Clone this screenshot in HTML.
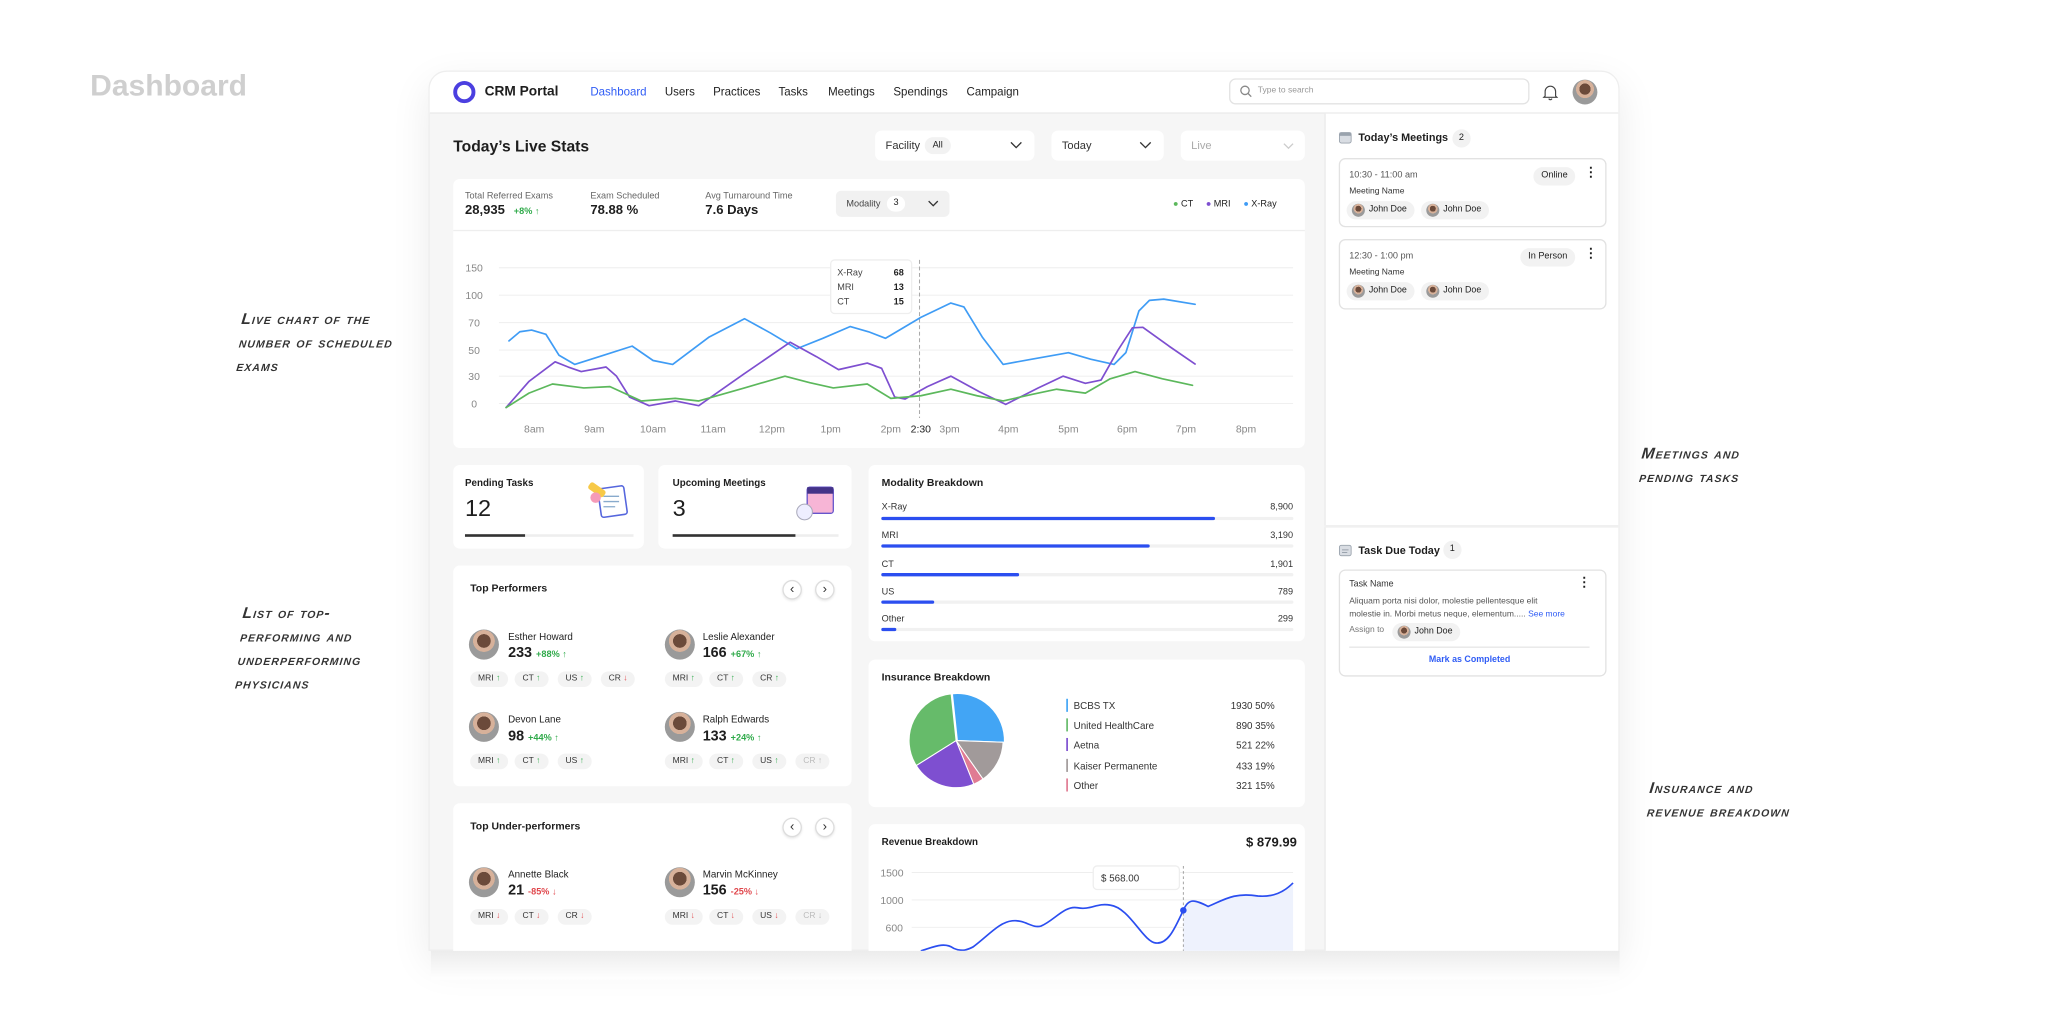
<!DOCTYPE html>
<html><head><meta charset="utf-8">
<style>
*{margin:0;padding:0;box-sizing:border-box}
html,body{width:2048px;height:1021px;overflow:hidden;background:#fff;font-family:"Liberation Sans",Arial,sans-serif;color:#1e1e1e}
#w{position:absolute;left:0;top:0;width:1568px;height:782px;transform:scale(1.30612);transform-origin:0 0}
.a{position:absolute;white-space:nowrap;line-height:1}
.card{position:absolute;background:#fff;border-radius:5px}
.note{position:absolute;font-style:italic;font-weight:bold;font-variant:small-caps;font-size:12px;line-height:18px;color:#333;letter-spacing:.8px;transform:skewX(-6deg)}
.chip{position:absolute;height:12px;line-height:12px;font-size:6.5px;background:#f3f3f3;border-radius:6px;padding:0 6px;color:#333}
.up{color:#2faa4a}.dn{color:#e0474c}
.av{position:absolute;border-radius:50%;background:radial-gradient(circle at 50% 38%,#6b4a3a 0 28%,#d7b19a 29% 45%,#9a9a9a 46%)}
.sm{font-size:7px;color:#555}
.nav{font-size:8.8px;top:66px;color:#222}
.arrow{position:absolute;width:15px;height:15px;border:1px solid #ddd;border-radius:50%;font-size:10px;line-height:13px;text-align:center;color:#333;background:#fff;box-shadow:0 1px 2px rgba(0,0,0,.1)}
.pill{position:absolute;background:#f2f2f2;border-radius:8px;font-size:7px;padding:0 6px;height:14px;line-height:14px}
</style></head><body><div id="w">

<div class="a" style="left:69px;top:54px;font-size:23px;font-weight:bold;color:#cfcfcf">Dashboard</div>

<div class="note" style="left:183px;top:235px">Live chart of the<br>number of scheduled<br>exams</div>
<div class="note" style="left:183px;top:460px">List of top-<br>performing and<br>underperforming<br>physicians</div>
<div class="note" style="left:1256px;top:338px">Meetings and<br>pending tasks</div>
<div class="note" style="left:1262px;top:594px">Insurance and<br>revenue breakdown</div>

<!-- frame -->
<div style="position:absolute;left:328px;top:54px;width:912px;height:674px;border-radius:14px 14px 0 0;background:#f6f6f6;box-shadow:0 10px 30px rgba(0,0,0,.08);overflow:hidden;border:1px solid #eee">
</div>
<div style="position:absolute;left:330px;top:728px;width:910px;height:22px;background:linear-gradient(#ececec,#fff)"></div>

<!-- navbar -->
<div style="position:absolute;left:329px;top:55px;width:910px;height:32px;background:#fff;border-bottom:1px solid #e8e8e8;border-radius:13px 13px 0 0"></div>
<div style="position:absolute;left:347px;top:62px;width:17px;height:17px;border-radius:50%;border:3.5px solid #4b3fe0"></div>
<div class="a" style="left:371px;top:65px;font-size:10.5px;font-weight:600">CRM Portal</div>
<div class="a nav" style="left:452px;color:#2f5cf5">Dashboard</div>
<div class="a nav" style="left:509px">Users</div>
<div class="a nav" style="left:546px">Practices</div>
<div class="a nav" style="left:596px">Tasks</div>
<div class="a nav" style="left:634px">Meetings</div>
<div class="a nav" style="left:684px">Spendings</div>
<div class="a nav" style="left:740px">Campaign</div>
<div style="position:absolute;left:941px;top:60px;width:230px;height:20px;border:1px solid #e3e3e3;border-radius:5px;background:#fff"></div>
<svg style="position:absolute;left:949px;top:65px" width="10" height="10" viewBox="0 0 10 10"><circle cx="4.2" cy="4.2" r="3.2" fill="none" stroke="#888" stroke-width="1"/><path d="M6.6 6.6L9 9" stroke="#888" stroke-width="1"/></svg>
<div class="a" style="left:963px;top:67px;font-size:6.5px;color:#999">Type to search</div>
<svg style="position:absolute;left:1181px;top:64px" width="12" height="13" viewBox="0 0 12 13"><path d="M2 9.5V6a4 4 0 0 1 8 0v3.5l1 1H1z M4.8 11.5a1.3 1.3 0 0 0 2.4 0" fill="none" stroke="#444" stroke-width=".9"/></svg>
<div class="av" style="left:1204px;top:61px;width:19px;height:19px"></div>

<!-- right panel -->
<div style="position:absolute;left:1014px;top:87px;width:225px;height:641px;background:#fff;border-left:1px solid #eaeaea"></div>
<div style="position:absolute;left:1014px;top:402px;width:225px;height:2px;background:#f0f0f0"></div>
<svg style="position:absolute;left:1025px;top:100px" width="10" height="10"><rect x=".5" y="1.5" width="9" height="8" rx="1.5" fill="#d9dde3" stroke="#9aa3ad" stroke-width=".7"/><rect x=".5" y="1.5" width="9" height="2.5" fill="#9aa3ad"/></svg>
<div class="a" style="left:1040px;top:101px;font-size:8.3px;font-weight:600">Today’s Meetings</div>
<div class="pill" style="left:1112px;top:99px;padding:0 5px">2</div>

<div style="position:absolute;left:1025px;top:121px;width:205px;height:53px;border:1px solid #e2e2e2;border-radius:5px"></div>
<div class="a sm" style="left:1033px;top:131px">10:30 - 11:00 am</div>
<div class="pill" style="left:1174px;top:128px">Online</div>
<div class="a" style="left:1213px;top:128px;font-size:10px;font-weight:bold">⋮</div>
<div class="a" style="left:1033px;top:144px;font-size:6.5px;color:#333">Meeting Name</div>
<div class="pill" style="left:1031px;top:154px;padding-left:17px;font-size:6.8px">John Doe</div><div class="av" style="left:1035px;top:156px;width:10px;height:10px"></div>
<div class="pill" style="left:1088px;top:154px;padding-left:17px;font-size:6.8px">John Doe</div><div class="av" style="left:1092px;top:156px;width:10px;height:10px"></div>

<div style="position:absolute;left:1025px;top:183px;width:205px;height:54px;border:1px solid #e2e2e2;border-radius:5px"></div>
<div class="a sm" style="left:1033px;top:193px">12:30 - 1:00 pm</div>
<div class="pill" style="left:1164px;top:190px">In Person</div>
<div class="a" style="left:1213px;top:190px;font-size:10px;font-weight:bold">⋮</div>
<div class="a" style="left:1033px;top:206px;font-size:6.5px;color:#333">Meeting Name</div>
<div class="pill" style="left:1031px;top:216px;padding-left:17px;font-size:6.8px">John Doe</div><div class="av" style="left:1035px;top:218px;width:10px;height:10px"></div>
<div class="pill" style="left:1088px;top:216px;padding-left:17px;font-size:6.8px">John Doe</div><div class="av" style="left:1092px;top:218px;width:10px;height:10px"></div>

<svg style="position:absolute;left:1025px;top:416px" width="10" height="10"><rect x=".5" y="1.5" width="9" height="8" rx="1.5" fill="#d9dde3" stroke="#9aa3ad" stroke-width=".7"/><path d="M2.5 5h5M2.5 7h4" stroke="#9aa3ad" stroke-width=".7"/></svg>
<div class="a" style="left:1040px;top:417px;font-size:8.3px;font-weight:600">Task Due Today</div>
<div class="pill" style="left:1105px;top:414px;padding:0 5px">1</div>
<div style="position:absolute;left:1025px;top:436px;width:205px;height:82px;border:1px solid #e2e2e2;border-radius:5px"></div>
<div class="a" style="left:1033px;top:445px;font-size:6.8px;color:#333">Task Name</div>
<div class="a" style="left:1208px;top:442px;font-size:10px;font-weight:bold">⋮</div>
<div class="a" style="left:1033px;top:456px;font-size:6.5px;color:#555;line-height:10px">Aliquam porta nisi dolor, molestie pellentesque elit<br>molestie in. Morbi metus neque, elementum..... <span style="color:#2f5cf5">See more</span></div>
<div class="a" style="left:1033px;top:480px;font-size:6.5px;color:#777">Assign to</div>
<div class="pill" style="left:1066px;top:477px;padding-left:17px;font-size:6.8px">John Doe</div><div class="av" style="left:1070px;top:479px;width:10px;height:10px"></div>
<div style="position:absolute;left:1033px;top:495px;width:184px;height:1px;background:#e6e6e6"></div>
<div class="a" style="left:1094px;top:503px;font-size:6.8px;color:#2f5cf5;font-weight:600">Mark as Completed</div>

<!-- live stats header -->
<div class="a" style="left:347px;top:106px;font-size:12px;font-weight:600">Today’s Live Stats</div>
<div class="card" style="left:670px;top:100px;width:122px;height:23px"></div>
<div class="a" style="left:678px;top:107px;font-size:8.5px;color:#333">Facility</div>
<div class="pill" style="left:708px;top:105px;height:13px;line-height:13px">All</div>
<div class="card" style="left:805px;top:100px;width:86px;height:23px"></div>
<div class="a" style="left:813px;top:107px;font-size:8.5px;color:#333">Today</div>
<div class="card" style="left:904px;top:100px;width:95px;height:23px"></div>
<div class="a" style="left:912px;top:107px;font-size:8.5px;color:#aaa">Live</div>
<svg style="position:absolute;left:0;top:0" width="1568" height="782"><g fill="none" stroke-width="1"><path d="M774 109l4 4 4-4" stroke="#333"/><path d="M873 109l4 4 4-4" stroke="#333"/><path d="M983 110l3.5 3.5 3.5-3.5" stroke="#ccc"/></g></svg>

<!-- chart card -->
<div class="card" style="left:347px;top:137px;width:652px;height:206px"></div>
<div style="position:absolute;left:347px;top:176px;width:652px;height:1px;background:#eee"></div>
<div class="a" style="left:356px;top:147px;font-size:7px;color:#666">Total Referred Exams</div>
<div class="a" style="left:356px;top:157px;font-size:10px;font-weight:600">28,935 <span style="font-size:7px;color:#2faa4a;margin-left:4px">+8% ↑</span></div>
<div class="a" style="left:452px;top:147px;font-size:7px;color:#666">Exam Scheduled</div>
<div class="a" style="left:452px;top:157px;font-size:10px;font-weight:600">78.88 %</div>
<div class="a" style="left:540px;top:147px;font-size:7px;color:#666">Avg Turnaround Time</div>
<div class="a" style="left:540px;top:157px;font-size:10px;font-weight:600">7.6 Days</div>
<div style="position:absolute;left:640px;top:146px;width:87px;height:20px;background:#f1f1f1;border-radius:4px"></div>
<div class="a" style="left:648px;top:153px;font-size:7px;color:#444">Modality</div>
<div style="position:absolute;left:679px;top:150px;width:14px;height:12px;background:#fff;border-radius:6px;font-size:7px;text-align:center;line-height:12px">3</div>
<div class="a" style="left:898px;top:153px;font-size:7px"><span style="color:#5cb85c">●</span> CT &nbsp;&nbsp;&nbsp; <span style="color:#7e4fd0">●</span> MRI &nbsp;&nbsp;&nbsp; <span style="color:#3f9cf5">●</span> X-Ray</div>

<svg style="position:absolute;left:0;top:0" width="1568" height="782" font-family="Liberation Sans, sans-serif">
<path d="M711 154l3.5 3.5 3.5-3.5" fill="none" stroke="#333"/>
<g stroke="#eee" stroke-width=".7"><line x1="382" y1="205" x2="990" y2="205"/><line x1="382" y1="226" x2="990" y2="226"/><line x1="382" y1="247" x2="990" y2="247"/><line x1="382" y1="268" x2="990" y2="268"/><line x1="382" y1="288" x2="990" y2="288"/><line x1="382" y1="309" x2="990" y2="309"/></g>
<g font-size="8" fill="#888" text-anchor="middle"><text x="363" y="208">150</text><text x="363" y="229">100</text><text x="363" y="250">70</text><text x="363" y="271">50</text><text x="363" y="291">30</text><text x="363" y="312">0</text>
<text x="409" y="331">8am</text><text x="455" y="331">9am</text><text x="500" y="331">10am</text><text x="546" y="331">11am</text><text x="591" y="331">12pm</text><text x="636" y="331">1pm</text><text x="682" y="331">2pm</text><text x="705" y="331" fill="#222">2:30</text><text x="727" y="331">3pm</text><text x="772" y="331">4pm</text><text x="818" y="331">5pm</text><text x="863" y="331">6pm</text><text x="908" y="331">7pm</text><text x="954" y="331">8pm</text></g>
<line x1="704" y1="199" x2="704" y2="320" stroke="#aaa" stroke-dasharray="3 2" stroke-width=".8"/>
<g fill="none" stroke-width="1.3" stroke-linejoin="round" stroke-linecap="round">
<polyline stroke="#3f9cf5" points="389.7,261 398,254 407,252.7 418,256 428,272 440,279 462,272 484,265 500,276 515,279 543,258 570,244 590,255 610,267 630,259 651,250 665,254 678,259 705,243 728,232 738,235 752,258 768,279 790,275 818,270 835,275 853,279 862,270 872,238 880,230 891,229 915,233"/>
<polyline stroke="#7e4fd0" points="387.5,312 405,292 425,277 435,281 445,284.5 464,281 472,288 482,304 497,310.6 517,307 535,310.6 570,286 605,262 625,273 642,283 664,278 675,282 685,304 693,305.5 710,296 728,288 750,300 770,309.6 795,297 814,288 831,293.5 843,291 856,268 867,251 875,250.6 895,265 915,278.7"/>
<polyline stroke="#5cb85c" points="387.5,312 405,301 423,294 447,297 467,296 491,307 517,305 535,307 570,297 601,288 620,293 638,297 664,294 682,305 705,303 728,298 748,303 768,307 790,302 809,298 831,301 850,290 869,284.5 890,290 913,295"/>
</g>
<rect x="636" y="199" width="62" height="41" rx="3" fill="#fff" stroke="#eee"/>
<g font-size="7" fill="#444"><text x="641" y="211">X-Ray</text><text x="641" y="222">MRI</text><text x="641" y="233">CT</text></g>
<g font-size="7" fill="#222" font-weight="bold" text-anchor="end"><text x="692" y="211">68</text><text x="692" y="222">13</text><text x="692" y="233">15</text></g>
</svg>

<!-- pending / upcoming -->
<div class="card" style="left:347px;top:356px;width:146px;height:64px"></div>
<div class="a" style="left:356px;top:366px;font-size:7.5px;font-weight:600">Pending Tasks</div>
<div class="a" style="left:356px;top:380px;font-size:18px">12</div>
<div style="position:absolute;left:356px;top:409px;width:129px;height:2px;background:#eee"></div>
<div style="position:absolute;left:356px;top:409px;width:46px;height:2px;background:#333"></div>
<svg style="position:absolute;left:448px;top:367px" width="36" height="32"><rect x="11" y="6" width="20" height="22" rx="2" fill="#fff" stroke="#5566dd" stroke-width="1.2" transform="rotate(-8 21 17)"/><path d="M14 13h12M14 17h12M14 21h9" stroke="#8ac" stroke-width="1"/><rect x="2" y="5" width="14" height="6" rx="2" fill="#f7c948" transform="rotate(35 9 8)"/><circle cx="8" cy="14" r="4" fill="#f59bb8"/></svg>
<div class="card" style="left:504px;top:356px;width:148px;height:64px"></div>
<div class="a" style="left:515px;top:366px;font-size:7.5px;font-weight:600">Upcoming Meetings</div>
<div class="a" style="left:515px;top:380px;font-size:18px">3</div>
<div style="position:absolute;left:515px;top:409px;width:127px;height:2px;background:#eee"></div>
<div style="position:absolute;left:515px;top:409px;width:94px;height:2px;background:#333"></div>
<svg style="position:absolute;left:606px;top:367px" width="36" height="34"><rect x="12" y="6" width="20" height="20" rx="2" fill="#f7b5d6" stroke="#6655cc" stroke-width="1"/><rect x="12" y="6" width="20" height="5" fill="#443388"/><circle cx="10" cy="25" r="6" fill="#eef" stroke="#aab" stroke-width=".8"/></svg>

<!-- top performers -->
<div class="card" style="left:347px;top:433px;width:305px;height:169px"></div>
<div class="a" style="left:360px;top:447px;font-size:8px;font-weight:600">Top Performers</div>
<div class="arrow" style="left:599px;top:444px">‹</div><div class="arrow" style="left:624px;top:444px">›</div>

<div class="av" style="left:359px;top:482px;width:23px;height:23px"></div>
<div class="a" style="left:389px;top:484px;font-size:7.5px">Esther Howard</div>
<div class="a" style="left:389px;top:495px;font-size:11px;font-weight:600">233 <span class="up" style="font-size:7px">+88% ↑</span></div>
<div class="chip" style="left:360px;top:514px">MRI <span class="up">↑</span></div><div class="chip" style="left:394px;top:514px">CT <span class="up">↑</span></div><div class="chip" style="left:427px;top:514px">US <span class="up">↑</span></div><div class="chip" style="left:460px;top:514px">CR <span class="dn">↓</span></div>
<div class="av" style="left:509px;top:482px;width:23px;height:23px"></div>
<div class="a" style="left:538px;top:484px;font-size:7.5px">Leslie Alexander</div>
<div class="a" style="left:538px;top:495px;font-size:11px;font-weight:600">166 <span class="up" style="font-size:7px">+67% ↑</span></div>
<div class="chip" style="left:509px;top:514px">MRI <span class="up">↑</span></div><div class="chip" style="left:543px;top:514px">CT <span class="up">↑</span></div><div class="chip" style="left:576px;top:514px">CR <span class="up">↑</span></div>

<div class="av" style="left:359px;top:545px;width:23px;height:23px"></div>
<div class="a" style="left:389px;top:547px;font-size:7.5px">Devon Lane</div>
<div class="a" style="left:389px;top:559px;font-size:11px;font-weight:600">98 <span class="up" style="font-size:7px">+44% ↑</span></div>
<div class="chip" style="left:360px;top:577px">MRI <span class="up">↑</span></div><div class="chip" style="left:394px;top:577px">CT <span class="up">↑</span></div><div class="chip" style="left:427px;top:577px">US <span class="up">↑</span></div>
<div class="av" style="left:509px;top:545px;width:23px;height:23px"></div>
<div class="a" style="left:538px;top:547px;font-size:7.5px">Ralph Edwards</div>
<div class="a" style="left:538px;top:559px;font-size:11px;font-weight:600">133 <span class="up" style="font-size:7px">+24% ↑</span></div>
<div class="chip" style="left:509px;top:577px">MRI <span class="up">↑</span></div><div class="chip" style="left:543px;top:577px">CT <span class="up">↑</span></div><div class="chip" style="left:576px;top:577px">US <span class="up">↑</span></div><div class="chip" style="left:609px;top:577px;color:#bbb">CR ↑</div>

<!-- under performers -->
<div class="card" style="left:347px;top:615px;width:305px;height:113px;border-radius:5px 5px 0 0"></div>
<div class="a" style="left:360px;top:629px;font-size:8px;font-weight:600">Top Under-performers</div>
<div class="arrow" style="left:599px;top:626px">‹</div><div class="arrow" style="left:624px;top:626px">›</div>
<div class="av" style="left:359px;top:664px;width:23px;height:23px"></div>
<div class="a" style="left:389px;top:666px;font-size:7.5px">Annette Black</div>
<div class="a" style="left:389px;top:677px;font-size:11px;font-weight:600">21 <span class="dn" style="font-size:7px">-85% ↓</span></div>
<div class="chip" style="left:360px;top:696px">MRI <span class="dn">↓</span></div><div class="chip" style="left:394px;top:696px">CT <span class="dn">↓</span></div><div class="chip" style="left:427px;top:696px">CR <span class="dn">↓</span></div>
<div class="av" style="left:509px;top:664px;width:23px;height:23px"></div>
<div class="a" style="left:538px;top:666px;font-size:7.5px">Marvin McKinney</div>
<div class="a" style="left:538px;top:677px;font-size:11px;font-weight:600">156 <span class="dn" style="font-size:7px">-25% ↓</span></div>
<div class="chip" style="left:509px;top:696px">MRI <span class="dn">↓</span></div><div class="chip" style="left:543px;top:696px">CT <span class="dn">↓</span></div><div class="chip" style="left:576px;top:696px">US <span class="dn">↓</span></div><div class="chip" style="left:609px;top:696px;color:#bbb">CR ↓</div>

<!-- modality -->
<div class="card" style="left:665px;top:356px;width:334px;height:135px"></div>
<div class="a" style="left:675px;top:366px;font-size:8px;font-weight:600">Modality Breakdown</div>
<svg style="position:absolute;left:0;top:0" width="1568" height="782" font-family="Liberation Sans, sans-serif">
<g font-size="7" fill="#333"><text x="675" y="390">X-Ray</text><text x="675" y="412">MRI</text><text x="675" y="434">CT</text><text x="675" y="455">US</text><text x="675" y="476">Other</text></g>
<g font-size="7" fill="#333" text-anchor="end"><text x="990" y="390">8,900</text><text x="990" y="412">3,190</text><text x="990" y="434">1,901</text><text x="990" y="455">789</text><text x="990" y="476">299</text></g>
<g stroke-linecap="round" stroke-width="2.5"><line x1="676" y1="397" x2="989" y2="397" stroke="#f1f1f1"/><line x1="676" y1="418" x2="989" y2="418" stroke="#f1f1f1"/><line x1="676" y1="440" x2="989" y2="440" stroke="#f1f1f1"/><line x1="676" y1="461" x2="989" y2="461" stroke="#f1f1f1"/><line x1="676" y1="482" x2="989" y2="482" stroke="#f1f1f1"/>
<line x1="676" y1="397" x2="929" y2="397" stroke="#2b4ef0"/><line x1="676" y1="418" x2="879" y2="418" stroke="#2b4ef0"/><line x1="676" y1="440" x2="779" y2="440" stroke="#2b4ef0"/><line x1="676" y1="461" x2="714" y2="461" stroke="#2b4ef0"/><line x1="676" y1="482" x2="685" y2="482" stroke="#2b4ef0"/></g>
</svg>

<!-- insurance -->
<div class="card" style="left:665px;top:505px;width:334px;height:113px"></div>
<div class="a" style="left:675px;top:515px;font-size:8px;font-weight:600">Insurance Breakdown</div>
<svg style="position:absolute;left:0;top:0" width="1568" height="782" font-family="Liberation Sans, sans-serif">
<g stroke="#fff" stroke-width=".8">
<path d="M733 567L729.2 531.2A36 36 0 0 1 769 568.3Z" fill="#42a5f5"/>
<path d="M732 567L768 568.3A36 36 0 0 1 752.6 596.5Z" fill="#a19a9a"/>
<path d="M732 567L752.6 596.5A36 36 0 0 1 745.5 600.4Z" fill="#e07b93"/>
<path d="M732 567L745.5 600.4A36 36 0 0 1 701.5 586.1Z" fill="#7e4fd0"/>
<path d="M732 567L701.5 586.1A36 36 0 0 1 728.2 531.2Z" fill="#66bb6a"/>
</g>
<g stroke-width="1.3"><line x1="817" y1="535" x2="817" y2="545" stroke="#42a5f5"/><line x1="817" y1="550" x2="817" y2="560" stroke="#66bb6a"/><line x1="817" y1="565" x2="817" y2="575" stroke="#7e4fd0"/><line x1="817" y1="581" x2="817" y2="591" stroke="#a19a9a"/><line x1="817" y1="596" x2="817" y2="606" stroke="#e07b93"/></g>
<g font-size="7.5" fill="#333"><text x="822" y="543">BCBS TX</text><text x="822" y="558">United HealthCare</text><text x="822" y="573">Aetna</text><text x="822" y="589">Kaiser Permanente</text><text x="822" y="604">Other</text></g>
<g font-size="7.5" fill="#333" text-anchor="end"><text x="976" y="543">1930 50%</text><text x="976" y="558">890 35%</text><text x="976" y="573">521 22%</text><text x="976" y="589">433 19%</text><text x="976" y="604">321 15%</text></g>
</svg>

<!-- revenue -->
<div class="card" style="left:665px;top:631px;width:334px;height:97px;border-radius:5px 5px 0 0;overflow:hidden"></div>
<div class="a" style="left:675px;top:641px;font-size:7.5px;font-weight:600">Revenue Breakdown</div>
<div class="a" style="left:954px;top:641px;font-size:10px;font-weight:600">$ 879.99</div>
<svg style="position:absolute;left:665px;top:631px" width="334" height="97" font-family="Liberation Sans, sans-serif">
<g font-size="8" fill="#888"><text x="9" y="40">1500</text><text x="9" y="61">1000</text><text x="13" y="82">600</text></g>
<g stroke="#eee" stroke-width=".7"><line x1="33" y1="37" x2="325" y2="37"/><line x1="33" y1="58" x2="325" y2="58"/><line x1="33" y1="79" x2="325" y2="79"/></g>
<path d="M241 66 C245 56 250 58 260 63 C272 58 280 52 298 55 C310 56 318 52 325 45 L325 97 L241 97Z" fill="#eef2fd"/>
<path d="M40 97 C50 94 58 90 65 95 C72 98 76 96 80 94 C92 85 100 75 110 74 C120 73 125 80 132 78 C142 74 150 62 160 64 C170 66 175 60 185 62 C200 64 210 90 220 91 C230 92 235 78 241 66 C245 56 250 58 260 63 C272 58 280 52 298 55 C310 56 318 52 325 45" fill="none" stroke="#2b4ef0" stroke-width="1.3"/>
<line x1="241" y1="32" x2="241" y2="97" stroke="#999" stroke-dasharray="2 2" stroke-width=".7"/>
<circle cx="241" cy="66" r="2.5" fill="#2b4ef0"/>
<rect x="172" y="32" width="66" height="18" rx="3" fill="#fff" stroke="#eee"/>
<text x="178" y="44" font-size="7.5" fill="#333">$ 568.00</text>
</svg>

</div></body></html>
